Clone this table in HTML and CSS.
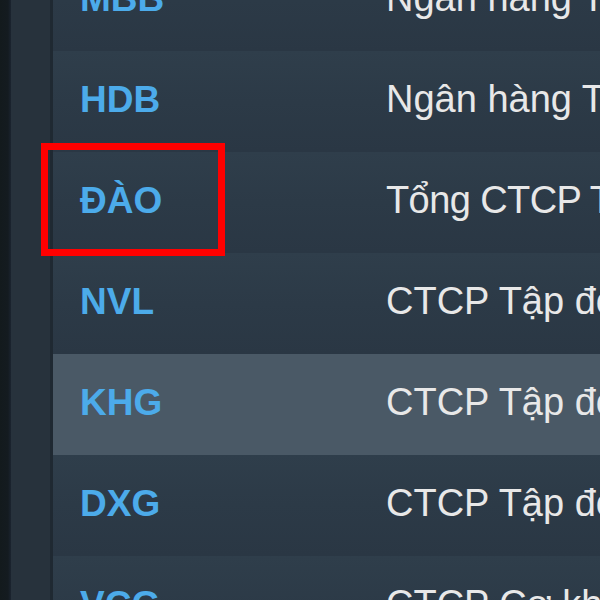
FILE: index.html
```html
<!DOCTYPE html>
<html lang="vi">
<head>
<meta charset="utf-8">
<title>Danh sách mã</title>
<link rel="stylesheet" href="styles.css">
</head>
<body>
<div class="screen">
  <div class="edge"></div>
  <div class="rail"></div>
  <div class="divider"></div>
  <div class="table">
    <div class="row"><div class="ticker">MBB</div><div class="name">Ngân hàng TMCP Quân đội</div></div>
    <div class="row"><div class="ticker">HDB</div><div class="name">Ngân hàng TMCP Phát triển TP.HCM</div></div>
    <div class="row"><div class="ticker marked">ĐÀO<span class="mark"></span></div><div class="name tight">Tổng CTCP Thương mại Xây dựng</div></div>
    <div class="row"><div class="ticker">NVL</div><div class="name">CTCP Tập đoàn Đầu tư Địa ốc No Va</div></div>
    <div class="row active"><div class="ticker">KHG</div><div class="name">CTCP Tập đoàn Khải Hoàn Land</div></div>
    <div class="row"><div class="ticker">DXG</div><div class="name">CTCP Tập đoàn Đất Xanh</div></div>
    <div class="row"><div class="ticker">VCG</div><div class="name">CTCP Cơ khí Xây dựng</div></div>
  </div>
</div>
</body>
</html>
```
FILE: styles.css
```css
html, body {
  margin: 0;
  padding: 0;
  background: #2b3845;
}
.screen {
  width: 600px;
  height: 600px;
  overflow: hidden;
  display: flex;
  font-family: "Liberation Sans", Arial, sans-serif;
}
.edge {
  width: 11px;
  flex: none;
  background: linear-gradient(to right, #131a1d 0, #141b20 8px, #1b2430 11px);
}
.rail {
  width: 39px;
  flex: none;
  background: #27323c;
}
.divider {
  width: 3px;
  flex: none;
  background: #1f2932;
}
.table {
  flex: 1;
  min-width: 0;
  margin-top: -50px;
  display: flex;
  flex-direction: column;
}
.row {
  height: 101px;
  flex: none;
  display: flex;
  align-items: center;
  background: linear-gradient(to bottom, #2f3e4b 0, #2c3a47 50%, #2a3744 100%);
}
.row.active {
  background: #4a5966;
}
.ticker {
  width: 333px;
  flex: none;
  box-sizing: border-box;
  padding-left: 27px;
  font-size: 37px;
  font-weight: bold;
  color: #4cabea;
  position: relative;
  top: -2px;
}
.name {
  font-size: 38px;
  color: #e8e8e8;
  white-space: nowrap;
  overflow: hidden;
  position: relative;
  top: -2px;
}
.name.tight {
  letter-spacing: -0.6px;
}
.mark {
  position: absolute;
  left: -12px;
  top: -37px;
  width: 170px;
  height: 99px;
  border: 7px solid #ff0000;
}
```
